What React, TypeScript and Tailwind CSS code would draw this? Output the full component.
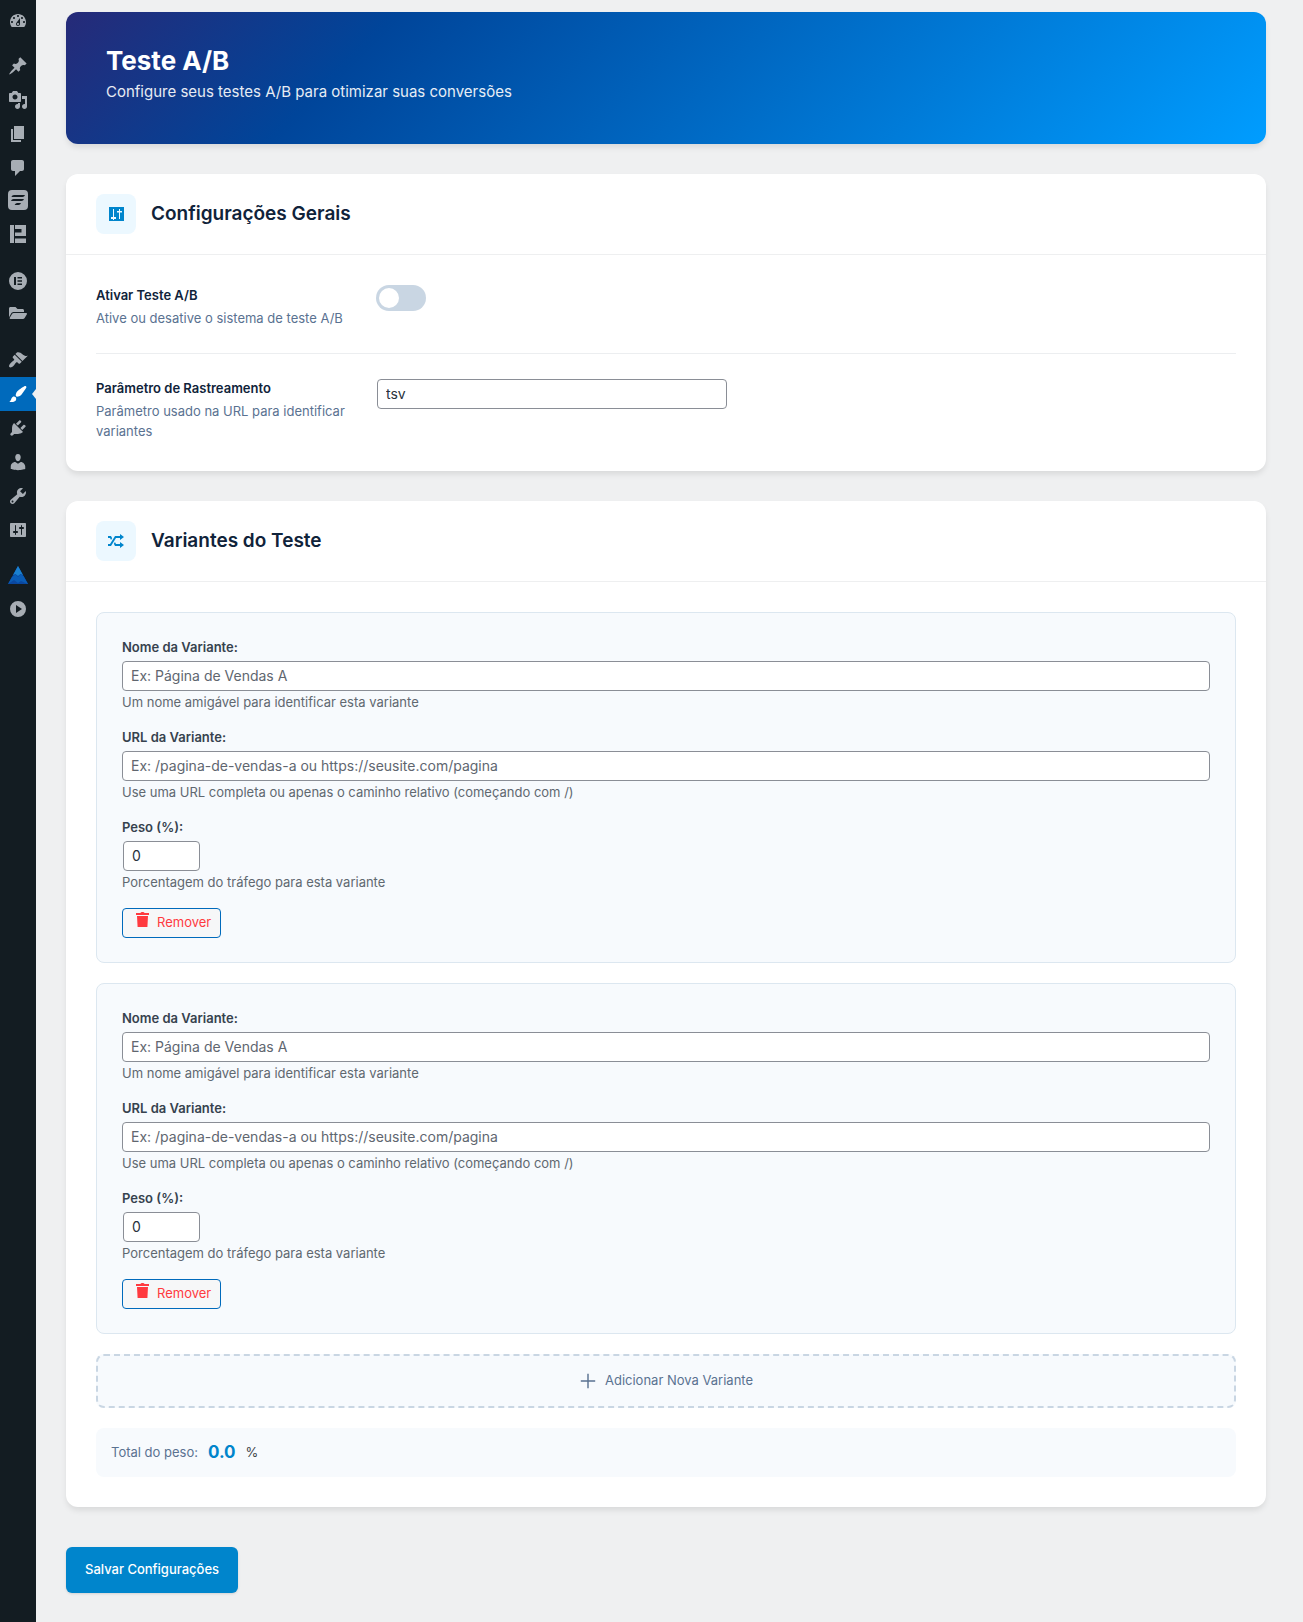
import React, { useState } from 'react';
import { FaFolderOpen } from 'react-icons/fa';

const ICONS: Record<string, string> = {
    dashboard: 'M3.76 16h12.48c1.1-1.37 1.76-3.11 1.76-5 0-4.42-3.58-8-8-8s-8 3.58-8 8c0 1.89.66 3.63 1.76 5zM10 4c.55 0 1 .45 1 1s-.45 1-1 1-1-.45-1-1 .45-1 1-1zM6 6c.55 0 1 .45 1 1s-.45 1-1 1-1-.45-1-1 .45-1 1-1zm8 0c.55 0 1 .45 1 1s-.45 1-1 1-1-.45-1-1 .45-1 1-1zm-5.37 5.55L12 7v6c0 1.1-.9 2-2 2s-2-.9-2-2c0-.57.24-1.08.63-1.45zM4 10c.55 0 1 .45 1 1s-.45 1-1 1-1-.45-1-1 .45-1 1-1zm12 0c.55 0 1 .45 1 1s-.45 1-1 1-1-.45-1-1 .45-1 1-1zm-5 3c0-.55-.45-1-1-1s-1 .45-1 1 .45 1 1 1 1-.45 1-1z',
    pin: 'M10.44 3.02l1.82-1.82 6.36 6.35-1.83 1.82c-1.05-.68-2.48-.57-3.41.36l-.75.75c-.92.93-1.04 2.35-.35 3.41l-1.83 1.82-2.41-2.41-2.8 2.79c-.42.42-3.38 2.71-3.8 2.29s1.86-3.39 2.28-3.81l2.79-2.79L4.1 9.36l1.83-1.82c1.05.69 2.48.57 3.4-.36l.75-.75c.93-.92 1.05-2.35.36-3.41z',
    media: 'M13 11V4c0-.55-.45-1-1-1h-1.67L9 1H5L3.67 3H2c-.55 0-1 .45-1 1v7c0 .55.45 1 1 1h10c.55 0 1-.45 1-1zM7 4.5c1.38 0 2.5 1.12 2.5 2.5S8.38 9.5 7 9.5 4.5 8.38 4.5 7 5.62 4.5 7 4.5zM14 6h5v10.5c0 1.38-1.12 2.5-2.5 2.5S14 17.88 14 16.5s1.12-2.5 2.5-2.5c.17 0 .34.02.5.05V9h-3V6zm-4 8.05V13h2v3.5c0 1.38-1.12 2.5-2.5 2.5S7 17.88 7 16.5 8.12 14 9.5 14c.17 0 .34.02.5.05z',
    page: 'M6 15V2h10v13H6zm-1 1h8v2H3V5h2v11z',
    comments: 'M5 2h9c1.1 0 2 .9 2 2v7c0 1.1-.9 2-2 2h-2l-5 5v-5H5c-1.1 0-2-.9-2-2V4c0-1.1.9-2 2-2z',
    forms: 'M4 0h12a4 4 0 0 1 4 4v12a4 4 0 0 1-4 4H4a4 4 0 0 1-4-4V4a4 4 0 0 1 4-4zM6 5a3 3 0 0 0-2.600 2H14.500A3 3 0 0 0 17 5zM5.500 9A3 3 0 0 0 3 11H13.500A3 3 0 0 0 16 9zM9 13a3 3 0 0 0-2.400 2H10.500A3 3 0 0 0 13 13z',
    blocks: 'M2 1h4v18H2zM7 1h11v11H7V8.500h6.500V5H7zM7 14.500h11V19H7z',
    elementor: 'M10 1a9 9 0 1 1 0 18 9 9 0 0 1 0-18zM6 6v8h2V6zm3.500 0v1.600H14V6zm0 3.200v1.600H14V9.200zm0 3.200V14H14v-1.600z',
    appearance: 'M14.48 11.06L7.41 3.99l1.5-1.5c.5-.56 2.3-.47 3.51.32 1.21.8 1.43 1.28 2.91 2.1 1.18.64 2.45 1.26 4.45.85zm-.71.71L6.7 4.7 4.93 6.47c-.39.39-.39 1.02 0 1.41l1.06 1.06c.39.39.39 1.03 0 1.42-.6.6-1.43 1.11-2.21 1.69-.35.26-.7.53-1.01.84C1.43 14.23.4 16.08 1.4 17.07c.99 1 2.84-.03 4.18-1.36.31-.31.58-.66.85-1.02.57-.78 1.08-1.61 1.69-2.21.39-.39 1.02-.39 1.41 0l1.06 1.06c.39.39 1.02.39 1.41 0z',
    brush: 'M18.33 3.57s.27-.8-.31-1.36c-.53-.52-1.22-.24-1.22-.24-.61.3-5.76 3.47-7.67 5.57-.86.96-2.06 3.79-1.09 4.82.92.98 3.96-.17 4.79-1 2.06-2.06 5.21-7.17 5.5-7.79zM1.4 17.65c2.37-1.56 1.46-3.41 3.23-4.64.93-.65 2.22-.62 3.08.29.63.67.8 2.57-.16 3.46-1.57 1.45-4 1.55-6.15.89z',
    plugins: 'M13.11 4.36L9.87 7.6 8 5.73l3.24-3.24c.35-.34 1.05-.2 1.56.32.52.51.66 1.21.31 1.55zm-8 1.77l.91-1.12 9.01 9.01-1.19.84c-.71.71-2.63 1.16-3.82 1.16H6.14L4.9 17.26c-.59.59-1.54.59-2.12 0-.59-.58-.59-1.53 0-2.12l1.24-1.24v-3.88c0-1.13.4-3.19 1.09-3.89zm7.26 3.97l3.24-3.24c.34-.35 1.04-.21 1.55.31.52.51.66 1.21.31 1.55l-3.24 3.25z',
    users: 'M10 9.25c-2.27 0-2.73-3.44-2.73-3.44C7 4.02 7.82 2 9.97 2c2.16 0 2.98 2.02 2.71 3.81 0 0-.41 3.44-2.68 3.44zm0 2.57L12.72 10c2.39 0 4.52 2.33 4.52 4.53v2.49s-3.65 1.13-7.24 1.13c-3.65 0-7.24-1.13-7.24-1.13v-2.49c0-2.25 1.94-4.48 4.47-4.48z',
    tools: 'M16.68 9.77c-1.34 1.34-3.3 1.67-4.95.99l-5.41 6.52c-.99.99-2.59.99-3.58 0s-.99-2.59 0-3.57l6.52-5.42c-.68-1.65-.35-3.61.99-4.95 1.28-1.28 3.12-1.62 4.72-1.06l-2.89 2.89 2.82 2.82 2.86-2.87c.53 1.58.18 3.39-1.08 4.65zM3.81 16.21c.4.39 1.04.39 1.43 0 .4-.4.4-1.04 0-1.43-.39-.4-1.03-.4-1.43 0-.39.39-.39 1.03 0 1.43z',
    settings: 'M18 16V4c0-.55-.45-1-1-1H3c-.55 0-1 .45-1 1v12c0 .55.45 1 1 1h14c.55 0 1-.45 1-1zM8 11h1c.55 0 1 .45 1 1s-.45 1-1 1H8v1.5c0 .28-.22.5-.5.5s-.5-.22-.5-.5V13H6c-.55 0-1-.45-1-1s.45-1 1-1h1V5.5c0-.28.22-.5.5-.5s.5.22.5.5V11zm5-2h-1c-.55 0-1-.45-1-1s.45-1 1-1h1V5.5c0-.28.22-.5.5-.5s.5.22.5.5V7h1c.55 0 1 .45 1 1s-.45 1-1 1h-1v5.5c0 .28-.22.5-.5.5s-.5-.22-.5-.5V9z',
    sliders: 'M3 3h15v14H3zM7 5v8H5v2h2v1h1v-1h2v-2H8V5zM13 5v2h-2v1.500h2V15h1V8.500h2V7h-2V5z',
    play: 'M10 2a8 8 0 1 1 0 16 8 8 0 0 1 0-16zM8 6v8l6-4z',
    randomize: 'M18 6.01L14 9V7h-4l-5 8H2v-2h2l5-8h5V3zM2 5h3l1.15 2.17-1.12 1.8L4 7H2V5zm16 9.01L14 17v-2H9l-1.15-2.17 1.12-1.8L10 13h4v-2z',
    trash: 'M7.500 3c.3-.6 1-1 2-1s1.700.4 2 1h4.500v2H3V3zM4 6h11l-.6 11H4.600z',
    plus: 'M9.200 2h1.600v7.200H18v1.600h-7.200V18H9.200v-7.200H2V9.200h7.200z',
};

function Icon({ name, className = 'size-5' }: { name: string; className?: string }) {
    return (
        <svg viewBox="0 0 20 20" fill="currentColor" fillRule="evenodd" aria-hidden="true" className={className}>
            <path d={ICONS[name]} />
        </svg>
    );
}

function MountainLogo() {
    return (
        <svg viewBox="0 0 20 20" aria-hidden="true" className="size-5">
            <path d="M10 1L20 19H0z" fill="#0a47a0" />
            <path d="M4 12l3.500-2.500L10 12l2.500-2.500 3 1.500L20 19l-7-3-3 2-4-3-6 4z" fill="#0a5cb6" />
            <path d="M10 1l5 9-2.500-1-2.500 2-2.500-2L5 10z" fill="#1a80d0" />
        </svg>
    );
}

// Menu groups, split by a small gap
const MENU: { id: string; label: string; raised?: boolean }[][] = [
    [{ id: 'dashboard', label: 'Painel' }],
    [
        { id: 'pin', label: 'Posts' },
        { id: 'media', label: 'Mídia' },
        { id: 'page', label: 'Páginas' },
        { id: 'comments', label: 'Comentários' },
        { id: 'forms', label: 'Formulários', raised: true },
        { id: 'blocks', label: 'Blocos', raised: true },
    ],
    [
        { id: 'elementor', label: 'Elementor' },
        { id: 'folder', label: 'Modelos', raised: true },
    ],
    [
        { id: 'appearance', label: 'Aparência' },
        { id: 'brush', label: 'Teste A/B' },
        { id: 'plugins', label: 'Plugins' },
        { id: 'users', label: 'Usuários' },
        { id: 'tools', label: 'Ferramentas' },
        { id: 'settings', label: 'Configurações' },
    ],
    [
        { id: 'logo', label: 'Otimização' },
        { id: 'play', label: 'Recolher menu' },
    ],
];

function MenuIcon({ id }: { id: string }) {
    if (id === 'folder') return <FaFolderOpen className="size-[18px]" />;
    if (id === 'logo') return <MountainLogo />;
    return <Icon name={id} />;
}

function Sidebar() {
    return (
        <nav className="flex w-9 shrink-0 flex-col gap-[11px] bg-[#131c22] pt-1 text-[#a7adb4]">
            {MENU.map((group, i) => (
                <ul key={i}>
                    {group.map((item) => {
                        const active = item.id === 'brush';
                        return (
                            <li key={item.id} className="relative">
                                <a
                                    href="#"
                                    aria-label={item.label}
                                    className={`flex h-[34px] items-center justify-center ${active ? 'bg-[#006abc] text-white' : ''} ${item.raised ? 'pb-1' : ''}`}
                                >
                                    <MenuIcon id={item.id} />
                                </a>
                                {active && (
                                    <span className="absolute top-3 right-0 size-0 border-y-[5px] border-r-[4px] border-y-transparent border-r-[#eff0f1]" />
                                )}
                            </li>
                        );
                    })}
                </ul>
            ))}
        </nav>
    );
}

function Card({ icon, title, children }: { icon: string; title: string; children: React.ReactNode }) {
    return (
        <section className="mb-[30px] rounded-xl bg-white shadow-[0_4px_6px_-1px_rgba(0,0,0,0.1)]">
            <header className="flex items-center gap-[15px] border-b border-[#eeeff0] px-[30px] py-5">
                <span className="flex size-10 items-center justify-center rounded-lg bg-[#ecf8ff] text-[#0085cc]">
                    <Icon name={icon} />
                </span>
                <h2 className="text-[19px] font-semibold text-[#10233a]">{title}</h2>
            </header>
            <div className="p-[30px]">{children}</div>
        </section>
    );
}

const INPUT = 'h-[30px] rounded-sm border border-[#8a8e96] bg-white px-2 pb-0.5 text-sm text-[#28323c] placeholder:text-[#60666f]';

interface FieldProps {
    id: string;
    label: string;
    help: string;
    children: React.ReactNode;
}

function Field({ id, label, help, children }: FieldProps) {
    return (
        <div className="mb-4 flex flex-col items-start">
            <label htmlFor={id} className="mb-1 leading-[19px] font-semibold text-[#36424e]">{label}</label>
            {children}
            <p className="mt-0.5 leading-[19px] text-[#606870]">{help}</p>
        </div>
    );
}

function VariantCard({ index, onRemove }: { index: number; onRemove: () => void }) {
    const [weight, setWeight] = useState('0');

    return (
        <div className="rounded-lg border border-[#dce7f0] bg-[#f7fafd] px-[25px] pt-[25px] pb-6">
            <Field id={`name-${index}`} label="Nome da Variante:" help="Um nome amigável para identificar esta variante">
                <input id={`name-${index}`} type="text" placeholder="Ex: Página de Vendas A" className={`${INPUT} w-full`} />
            </Field>
            <Field id={`url-${index}`} label="URL da Variante:" help="Use uma URL completa ou apenas o caminho relativo (começando com /)">
                <input id={`url-${index}`} type="text" placeholder="Ex: /pagina-de-vendas-a ou https://seusite.com/pagina" className={`${INPUT} w-full`} />
            </Field>
            <Field id={`weight-${index}`} label="Peso (%):" help="Porcentagem do tráfego para esta variante">
                <input id={`weight-${index}`} type="text" inputMode="decimal" value={weight} onChange={(e) => setWeight(e.target.value)} className={`${INPUT} ml-px w-[77px]`} />
            </Field>
            <button
                type="button"
                onClick={onRemove}
                className="flex h-[30px] items-center gap-1 rounded-sm border border-[#006abc] bg-[#f6f7f8] pr-[9px] pl-2.5 text-[#ff3a3f]"
            >
                <Icon name="trash" className="mb-1.5 size-5" />
                Remover
            </button>
        </div>
    );
}

export default function App() {
    const [enabled, setEnabled] = useState(false);
    const [param, setParam] = useState('tsv');
    const [variants, setVariants] = useState([1, 2]);

    return (
        <div className="flex min-h-screen bg-[#eff0f1] font-[Inter,sans-serif] text-[13px]">
            <Sidebar />
            <main className="grow pt-3 pr-[37px] pb-[29px] pl-[30px]">
                <header className="mb-[30px] rounded-xl bg-[linear-gradient(135deg,#262a78_0%,#00459a_25%,#009dff_100%)] px-10 pt-[31px] pb-[39px] text-white shadow-[0_4px_6px_-1px_rgba(0,0,0,0.1)]">
                    <h1 className="text-[26px] leading-9 font-bold">Teste A/B</h1>
                    <p className="text-[15px] leading-[26px] opacity-90">Configure seus testes A/B para otimizar suas conversões</p>
                </header>

                <Card icon="sliders" title="Configurações Gerais">
                    <div className="flex gap-[30px] border-b border-[#eceef0] pb-[25px]">
                        <div className="w-[250px] shrink-0">
                            <label htmlFor="enabled" className="mb-[3px] block leading-5 font-semibold text-[#10233a]">Ativar Teste A/B</label>
                            <p className="leading-5 text-[#5a7291]">Ative ou desative o sistema de teste A/B</p>
                        </div>
                        <input
                            id="enabled"
                            type="checkbox"
                            role="switch"
                            checked={enabled}
                            onChange={(e) => setEnabled(e.target.checked)}
                            className="h-[26px] w-[50px] appearance-none rounded-full bg-[#c9d6e3] p-[3px] before:block before:size-5 before:rounded-full before:bg-white checked:bg-[#0085cc] checked:before:ml-auto"
                        />
                    </div>
                    <div className="flex gap-[30px] pt-6">
                        <div className="w-[250px] shrink-0">
                            <label htmlFor="param" className="mb-[3px] block leading-5 font-semibold text-[#10233a]">Parâmetro de Rastreamento</label>
                            <p className="leading-5 text-[#5a7291]">Parâmetro usado na URL para identificar variantes</p>
                        </div>
                        <input id="param" type="text" value={param} onChange={(e) => setParam(e.target.value)} className={`${INPUT} m-px w-[350px]`} />
                    </div>
                </Card>

                <Card icon="randomize" title="Variantes do Teste">
                    <div className="flex flex-col gap-5">
                        {variants.map((id) => (
                            <VariantCard key={id} index={id} onRemove={() => setVariants(variants.filter((v) => v !== id))} />
                        ))}
                        <button
                            type="button"
                            onClick={() => setVariants([...variants, Date.now()])}
                            className="flex h-[54px] items-center justify-center gap-2 rounded-lg border-2 border-dashed border-[#c9d6e3] bg-[#f7fafd] text-[#5a7291]"
                        >
                            <Icon name="plus" className="size-[18px]" />
                            Adicionar Nova Variante
                        </button>
                        <div className="flex items-center gap-2.5 rounded-lg bg-[#f7fafd] px-[15px] py-2.5 leading-[29px]">
                            <span className="text-[#5a7291]">Total do peso:</span>
                            <strong className="text-[17px] leading-[29px] font-bold text-[#0085cc]">0.0</strong>
                            <span className="text-[#3c434a]">%</span>
                        </div>
                    </div>
                </Card>

                <button type="button" className="mt-2.5 h-[46px] rounded-md bg-[#0085cc] px-[19px] font-medium text-white shadow-sm">
                    Salvar Configurações
                </button>
            </main>
        </div>
    );
}
